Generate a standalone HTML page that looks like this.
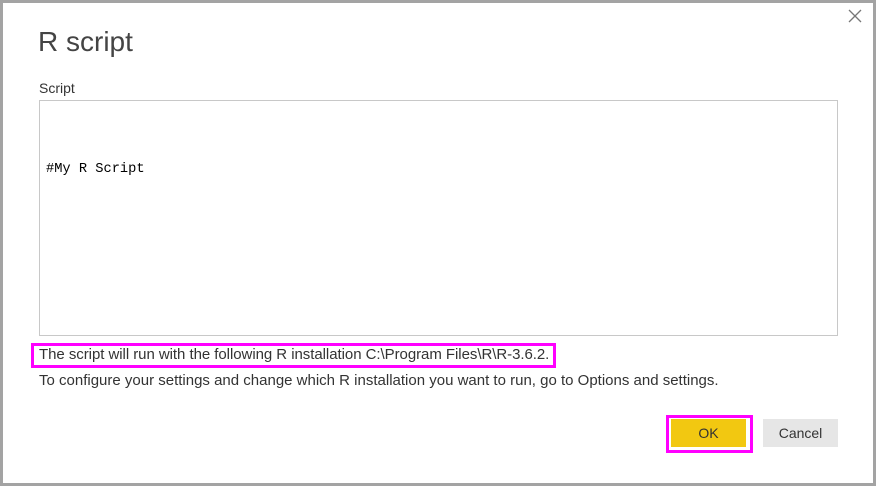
<!DOCTYPE html>
<html><head><style>
html,body{margin:0;padding:0}
body{width:876px;height:486px;background:#a3a3a3;position:relative;overflow:hidden;font-family:"Liberation Sans",sans-serif;color:#333}
.dlg{position:absolute;left:3px;top:3px;width:870px;height:480px;background:#fff}
.abs{position:absolute;white-space:nowrap}
</style></head><body>
<div class="dlg"></div>
<svg class="abs" style="left:848px;top:9px" width="14" height="14"><path d="M1 1L13 13M13 1L1 13" stroke="#777" stroke-width="1.3"/></svg>
<div class="abs" style="left:38px;top:26px;font-size:28px;color:#444">R script</div>
<div class="abs" style="left:39px;top:80px;font-size:14px;color:#333">Script</div>
<div class="abs" style="left:39px;top:100px;width:797px;height:234px;border:1px solid #c8c8c8"></div>
<div class="abs" style="left:46px;top:162px;font-family:'Liberation Mono',monospace;font-size:13.7px;color:#000">#My R Script</div>
<div class="abs" style="left:31px;top:343px;width:519px;height:19px;border:3px solid #ff00ff"></div>
<div class="abs" style="left:39px;top:346px;font-size:15px;color:#333;letter-spacing:-0.05px">The script will run with the following R installation C:\Program Files\R\R-3.6.2.</div>
<div class="abs" style="left:39px;top:372px;font-size:15px;color:#333">To configure your settings and change which R installation you want to run, go to Options and settings.</div>
<div class="abs" style="left:666px;top:415px;width:81px;height:32px;border:3px solid #ff00ff"></div>
<div class="abs" style="left:671px;top:419px;width:75px;height:28px;background:#f2c811;font-size:14px;line-height:28px;text-align:center;color:#333">OK</div>
<div class="abs" style="left:763px;top:419px;width:75px;height:28px;background:#e6e6e6;font-size:14px;line-height:28px;text-align:center;color:#333">Cancel</div>
</body></html>
